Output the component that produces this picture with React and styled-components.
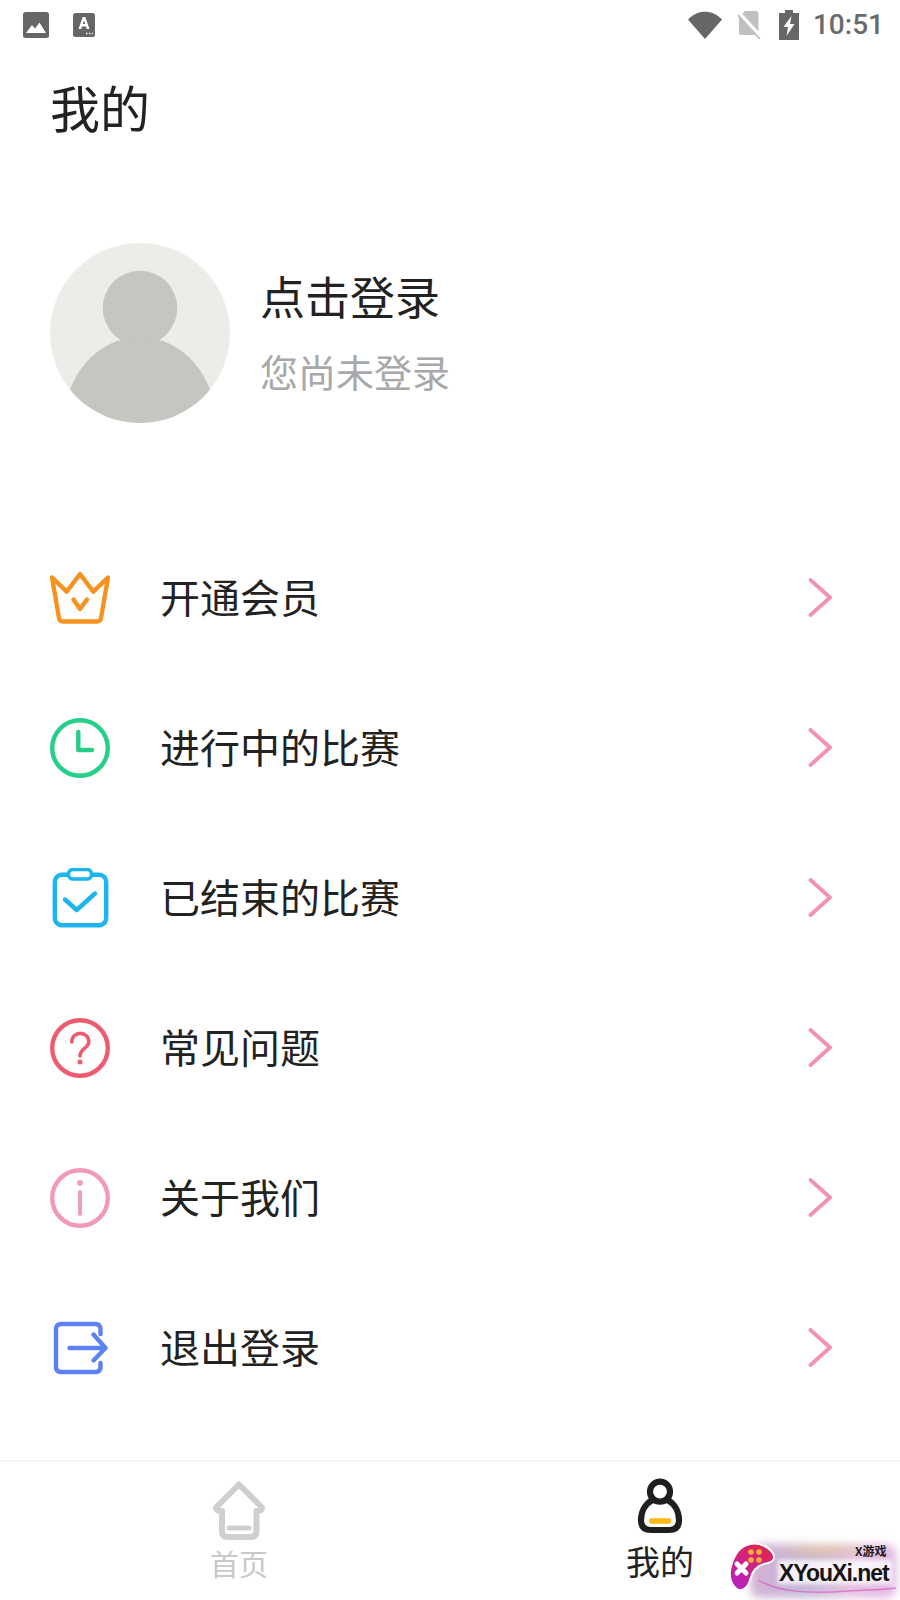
import React from "react";
import styled, { createGlobalStyle } from "styled-components";

const Global = createGlobalStyle`
  html, body { margin: 0; padding: 0; background: #fff; }
  body { font-family: "Noto Sans CJK SC", "Noto Sans", sans-serif; color: #222; }
`;

const Page = styled.div`
  position: relative;
  width: 900px;
  height: 1600px;
  overflow: hidden;
  display: flex;
  flex-direction: column;
  background: #fff;
`;

const StatusBar = styled.div`
  height: 50px;
  display: flex;
  align-items: center;
  padding: 0 16px 0 23px;
  box-sizing: border-box;
`;
const StatusLeft = styled.div`
  display: flex;
  align-items: center;
  gap: 24px;
  flex: 1;
`;
const StatusRight = styled.div`
  display: flex;
  align-items: center;
  gap: 16px;
`;
const Clock = styled.span`
  font-family: Roboto, sans-serif;
  font-size: 28px;
  font-weight: 500;
  color: #6a6a6a;
  line-height: 50px;
  margin-left: -2px;
`;

const Header = styled.div`
  height: 116px;
  box-sizing: border-box;
  display: flex;
  align-items: center;
  padding: 0 0 4px 50px;
`;
const Title = styled.h1`
  margin: 0;
  font-size: 50px;
  font-weight: 400;
  color: #222;
  line-height: 1;
`;

const Profile = styled.div`
  display: flex;
  align-items: center;
  gap: 30px;
  padding: 77px 0 0 50px;
`;
const AvatarSvg = styled.svg`
  display: block;
  width: 180px;
  height: 180px;
`;
const ProfileText = styled.div`
  display: flex;
  flex-direction: column;
  gap: 26px;
`;
const LoginName = styled.div`
  font-size: 45px;
  line-height: 50px;
  color: #222;
`;
const LoginHint = styled.div`
  font-size: 38px;
  line-height: 48px;
  color: #a8a8a8;
`;

const Menu = styled.div`
  margin-top: 100px;
  display: flex;
  flex-direction: column;
`;
const Row = styled.div`
  height: 150px;
  display: flex;
  align-items: center;
  padding: 0 68px 0 50px;
`;
const RowIcon = styled.svg`
  width: 60px;
  height: 60px;
  flex: none;
  fill: none;
  stroke: ${(p) => p.$color};
  stroke-width: 4.4;
  stroke-linecap: round;
  stroke-linejoin: round;
`;
const RowLabel = styled.div`
  flex: 1;
  margin-left: 50px;
  padding-bottom: 4px;
  font-size: 40px;
  line-height: 50px;
  color: #222;
`;
const Chevron = styled.svg`
  width: 24px;
  height: 40px;
  flex: none;
  fill: none;
  stroke: #f391b3;
  stroke-width: 3.8;
  stroke-linecap: round;
  stroke-linejoin: round;
`;

const TabBar = styled.div`
  margin-top: auto;
  height: 140px;
  box-sizing: border-box;
  border-top: 2px solid #f6f6f6;
  display: grid;
  grid-template-columns: 1fr 1fr;
  padding: 0 28px;
`;
const Tab = styled.div`
  display: flex;
  flex-direction: column;
  align-items: center;
  padding-top: ${(p) => p.$top}px;
`;
const TabIcon = styled.svg`
  display: block;
  width: 60px;
  height: 60px;
  fill: none;
  stroke-linecap: round;
  stroke-linejoin: round;
`;
const TabLabel = styled.div`
  font-size: ${(p) => (p.$active ? 34 : 29)}px;
  line-height: 40px;
  margin-top: ${(p) => (p.$active ? 7 : 3)}px;
  margin-right: ${(p) => (p.$active ? 2 : 0)}px;
  color: ${(p) => (p.$active ? "#222" : "#c9c9c9")};
`;

const Watermark = styled.div`
  position: absolute;
  right: 0;
  bottom: 0;
  width: 172px;
  height: 58px;
`;
const WatermarkGlow = styled.div`
  position: absolute;
  left: 22px;
  top: 2px;
  width: 146px;
  height: 54px;
  border-radius: 10px;
  background:
    radial-gradient(ellipse 50px 8px at 72px 6px, #eec39a 0%, rgba(238, 195, 154, 0) 100%),
    linear-gradient(100deg, #d6b1d6 0%, #c4b8d8 40%, #e6c4e2 70%, #e3b4e6 100%);
  filter: blur(4px);
`;
const WatermarkCard = styled.div`
  position: absolute;
  left: 50px;
  top: 18px;
  width: 114px;
  height: 24px;
  background: rgba(255, 255, 255, 0.8);
  filter: blur(2px);
`;
const WatermarkSwoosh = styled.svg`
  position: absolute;
  left: 30px;
  top: 38px;
  width: 138px;
  height: 18px;
  fill: none;
`;
const WatermarkLogo = styled.svg`
  position: absolute;
  left: 0;
  top: 0;
  width: 48px;
  height: 52px;
`;
const WatermarkName = styled.span`
  position: absolute;
  left: 51px;
  top: 17px;
  font-family: "Liberation Sans", sans-serif;
  font-size: 23px;
  font-weight: 700;
  line-height: 28px;
  color: #141414;
  letter-spacing: -1px;
  white-space: nowrap;
`;
const WatermarkSmall = styled.span`
  position: absolute;
  left: 127px;
  top: 2px;
  font-size: 12px;
  font-weight: 700;
  line-height: 14px;
  color: #1a1a1a;
  white-space: nowrap;
`;

const Arrow = () => (
  <Chevron viewBox="0 0 24 40">
    <path d="M2.5 2 L22 19.5 L2.5 37" />
  </Chevron>
);

const items = [
  {
    label: "开通会员",
    color: "#f7921e",
    icon: (
      <>
        <path d="M2 9.5 L16.7 23.7 L30 6 L43.3 23.7 L58 9.5 L51 50 Q50.4 53.5 47 53.5 H13 Q9.6 53.5 9 50 Z" />
        <path d="M23.5 31.5 L30 41 L37 31.5" />
      </>
    ),
  },
  {
    label: "进行中的比赛",
    color: "#25cf87",
    icon: (
      <>
        <circle cx="30" cy="30" r="27.8" />
        <path d="M28.3 14 V32 H42" />
      </>
    ),
  },
  {
    label: "已结束的比赛",
    color: "#1cb5ee",
    icon: (
      <>
        <rect x="4.8" y="6.8" width="51.4" height="50.4" rx="7" />
        <rect x="18.5" y="1.5" width="23" height="9.5" rx="4.5" fill="#fff" strokeWidth="3.6" />
        <path d="M15 31.5 L26.7 42 L45 25.5" />
      </>
    ),
  },
  {
    label: "常见问题",
    color: "#ef5a6f",
    icon: (
      <>
        <circle cx="30" cy="30" r="27.8" />
        <path d="M21.8 24 C21.8 12.5 38.8 12.5 38.8 24 C38.8 30 30 30.5 30 38" strokeWidth="3.6" />
        <circle cx="30" cy="44" r="1.2" strokeWidth="2.6" fill="#ef5a6f" />
      </>
    ),
  },
  {
    label: "关于我们",
    color: "#f29ab5",
    icon: (
      <>
        <circle cx="30" cy="30" r="27.8" />
        <path d="M30 24 V46" strokeWidth="3.8" />
        <circle cx="30" cy="14.8" r="1.4" strokeWidth="3" fill="#f29ab5" />
      </>
    ),
  },
  {
    label: "退出登录",
    color: "#5b82ee",
    icon: (
      <>
        <path d="M50.5 16 V11 Q50.5 6 45.5 6 H11 Q6 6 6 11 V49 Q6 54 11 54 H45.5 Q50.5 54 50.5 49 V45" />
        <path d="M19.5 30 H55.5 M43.5 16.5 L55.5 30 L43.5 42.5" />
      </>
    ),
  },
];

export default function App() {
  return (
    <Page>
      <Global />
      <StatusBar>
        <StatusLeft>
          <svg width="26" height="26" viewBox="0 0 26 26">
            <rect width="26" height="26" rx="2.5" fill="#666" />
            <path d="M3 21 L9 13 L12 16.5 L16.5 10.5 L23 21 Z" fill="#fff" />
          </svg>
          <svg width="22" height="24" viewBox="0 0 22 24">
            <rect width="22" height="24" rx="2.5" fill="#666" />
            <path d="M5.5 16 L9.7 4 H12.3 L16.5 16 H13.8 L13 13.4 H9 L8.2 16 Z M9.8 11 H12.2 L11 7.4 Z" fill="#fff" />
            <path d="M13 20.5 H14.5 M16 20.5 H17.5 M19 20.5 H20" stroke="#fff" strokeWidth="1.6" />
          </svg>
        </StatusLeft>
        <StatusRight>
          <svg width="34" height="28" viewBox="0 0 34 28">
            <path d="M0 8.5 C9.5 -2 24.5 -2 34 8.5 L17 28 Z" fill="#666" />
          </svg>
          <svg width="25" height="28" viewBox="0 0 25 28">
            <path d="M7 0 H18 Q20.5 0 20.5 2.5 V24 H3 Q1 24 1 22 V6 Z" fill="#c0c0c0" />
            <path d="M-1 0 L23 26" stroke="#fff" strokeWidth="4" />
            <path d="M-2 2 L22 28" stroke="#c0c0c0" strokeWidth="1.8" />
          </svg>
          <svg width="20" height="30" viewBox="0 0 20 30">
            <path d="M6 0 H14 V3 H20 V30 H0 V3 H6 Z" fill="#666" />
            <path d="M12.5 6 L4.5 17 H9 L7.5 26 L15.5 14 H11 Z" fill="#fff" />
          </svg>
          <Clock>10:51</Clock>
        </StatusRight>
      </StatusBar>

      <Header>
        <Title>我的</Title>
      </Header>

      <Profile>
        <AvatarSvg viewBox="0 0 180 180">
          <defs>
            <clipPath id="avatar-clip">
              <circle cx="90" cy="90" r="90" />
            </clipPath>
          </defs>
          <circle cx="90" cy="90" r="90" fill="#eeece8" />
          <g clipPath="url(#avatar-clip)" fill="#c6c5c0">
            <circle cx="90" cy="65" r="37.3" />
            <ellipse cx="90" cy="180" rx="76" ry="86" />
          </g>
        </AvatarSvg>
        <ProfileText>
          <LoginName>点击登录</LoginName>
          <LoginHint>您尚未登录</LoginHint>
        </ProfileText>
      </Profile>

      <Menu>
        {items.map((it) => (
          <Row key={it.label}>
            <RowIcon viewBox="0 0 60 60" $color={it.color}>
              {it.icon}
            </RowIcon>
            <RowLabel>{it.label}</RowLabel>
            <Arrow />
          </Row>
        ))}
      </Menu>

      <TabBar>
        <Tab $top={18}>
          <TabIcon viewBox="0 0 60 60" stroke="#cfcfcf" strokeWidth="6">
            <path d="M30 4.5 L7 27.5 Q6.5 31 13 31 V51 Q13 57 19 57 H41.5 Q47.5 57 47.5 51 V31 Q53.5 31 53 27.5 Z" />
            <path d="M20 48 H40" strokeWidth="5" />
          </TabIcon>
          <TabLabel>首页</TabLabel>
        </Tab>
        <Tab $top={12}>
          <TabIcon viewBox="0 0 60 60" stroke="#1f1f1f" strokeWidth="6.2">
            <circle cx="29" cy="17.7" r="10" />
            <path d="M21.5 26 C14 30 10 38 10 46 Q10 56 20 56 H38 Q48 56 48 46 C48 38 44 30 36.5 26" />
            <path d="M20.5 47 H37.5" stroke="#fdb813" strokeWidth="5.4" />
          </TabIcon>
          <TabLabel $active>我的</TabLabel>
        </Tab>
      </TabBar>

      <Watermark>
        <WatermarkGlow />
        <WatermarkCard />
        <WatermarkSwoosh viewBox="0 0 138 18">
          <path d="M0 0 C20 12 50 14 90 11 C110 10 125 10 138 8" stroke="#d65cc0" strokeWidth="1.5" opacity="0.7" />
        </WatermarkSwoosh>
        <WatermarkLogo viewBox="0 0 48 52">
          <defs>
            <linearGradient id="pad" x1="0.7" y1="0" x2="0.2" y2="1">
              <stop offset="0" stopColor="#e0254f" />
              <stop offset="1" stopColor="#b821c4" />
            </linearGradient>
          </defs>
          <path
            d="M22 2 C32 0 44 6 46 14 C47 19 42 21 36 22 C28 24 24 30 22 38 C20 46 14 50 9 47 C3 43 0 34 3 24 C6 13 12 4 22 2 Z"
            fill="url(#pad)"
            stroke="#fff"
            strokeWidth="2"
          />
          <path d="M9 22 L18 31 M18 22 L9 31" stroke="#fff" strokeWidth="5" strokeLinecap="round" />
          <g fill="#fbb03b">
            <circle cx="23" cy="10" r="2.8" />
            <circle cx="31" cy="10" r="2.8" />
            <circle cx="23" cy="18" r="2.8" />
            <circle cx="31" cy="18" r="2.8" />
          </g>
        </WatermarkLogo>
        <WatermarkName>XYouXi.net</WatermarkName>
        <WatermarkSmall>X游戏</WatermarkSmall>
      </Watermark>
    </Page>
  );
}
